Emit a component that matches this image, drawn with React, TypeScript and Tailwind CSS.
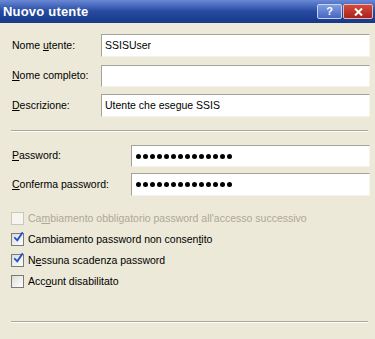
import React from 'react';

const font = { fontFamily: '"Liberation Sans", Arial, sans-serif' };

const Field: React.FC<{ value?: string; password?: boolean; className?: string }> = ({ value = '', password, className = '' }) => (
  <div
    className={`flex items-center bg-white border-t border-l border-[#a5a397] border-b border-r border-b-[#f4f3ee] border-r-[#f4f3ee] px-[3px] text-[10.5px] text-black ${className}`}
  >
    {password ? (
      <span className="flex gap-[2px] pl-[1px]">
        {Array.from({ length: 14 }).map((_, i) => (
          <span key={i} className="w-[5px] h-[5px] rounded-full bg-black" />
        ))}
      </span>
    ) : (
      value
    )}
  </div>
);

const Check: React.FC<{ checked?: boolean; disabled?: boolean; children: React.ReactNode }> = ({ checked, disabled, children }) => (
  <div className="flex items-center h-[21px]">
    <div
      className={`w-[13px] h-[13px] border flex items-center justify-center ${
        disabled ? 'border-[#cac8bb] bg-[#f6f5f0]' : 'border-[#7a7a7a] bg-gradient-to-br from-[#dcdcd6] to-white'
      }`}
    >
      {checked && (
        <svg width="11" height="13" viewBox="0 0 11 13" className="-mt-[4px] ml-[2px]">
          <path d="M1 7 L4 10 L10 1" stroke="#1f4fd1" strokeWidth="2.2" fill="none" strokeLinecap="square" />
        </svg>
      )}
    </div>
    <span className={`ml-[4px] text-[10.5px] ${disabled ? 'text-[#aca899]' : 'text-black'}`}>{children}</span>
  </div>
);

const Separator: React.FC = () => (
  <div className="mx-[11px] w-[357px] border-t border-[#aca899] border-b border-b-white" />
);

export default function App() {
  return (
    <div className="w-[375px] h-[339px] bg-[#ece9d8] overflow-hidden" style={font}>
      {/* title bar */}
      <div className="h-[23px] flex items-center justify-between bg-gradient-to-b from-[#6a88d6] via-[#264aa2] to-[#183887] pl-[3px] pr-[2px]">
        <span className="text-white font-bold text-[13px] tracking-[0.2px]">Nuovo utente</span>
        <div className="flex gap-[1px] items-center">
          <div className="w-[25px] h-[15px] rounded-[2px] border border-[#c8d4f0] bg-gradient-to-b from-[#7f9de3] to-[#4866bf] flex items-center justify-center text-white font-bold text-[11px] leading-none">
            ?
          </div>
          <div className="w-[30px] h-[15px] rounded-[2px] border border-[#e8b8b0] bg-gradient-to-b from-[#d5493a] to-[#a9231b] flex items-center justify-center">
            <svg width="9" height="8" viewBox="0 0 9 8">
              <path d="M1 0.5 L8 7.5 M8 0.5 L1 7.5" stroke="white" strokeWidth="2" />
            </svg>
          </div>
        </div>
      </div>

      {/* user fields */}
      <div className="flex flex-col gap-[8px] pt-[11px] pl-[12px] pr-[5px]">
        <div className="flex items-center h-[23px]">
          <span className="w-[89px] text-[10.5px] text-black">Nome <u>u</u>tente:</span>
          <Field value="SSISUser" className="flex-1 h-[23px]" />
        </div>
        <div className="flex items-center h-[22px]">
          <span className="w-[89px] text-[10.5px] text-black"><u>N</u>ome completo:</span>
          <Field className="flex-1 h-[22px]" />
        </div>
        <div className="flex items-center h-[23px] -mt-[1px]">
          <span className="w-[89px] text-[10.5px] text-black"><u>D</u>escrizione:</span>
          <Field value="Utente che esegue SSIS" className="flex-1 h-[23px]" />
        </div>
      </div>

      <div className="mt-[13px]">
        <Separator />
      </div>

      {/* password fields */}
      <div className="flex flex-col gap-[6px] pt-[13px] pl-[12px] pr-[5px]">
        <div className="flex items-center h-[22px]">
          <span className="w-[119px] text-[10.5px] text-black"><u>P</u>assword:</span>
          <Field password className="flex-1 h-[22px]" />
        </div>
        <div className="flex items-center h-[23px]">
          <span className="w-[119px] text-[10.5px] text-black"><u>C</u>onferma password:</span>
          <Field password className="flex-1 h-[23px]" />
        </div>
      </div>

      {/* options */}
      <div className="flex flex-col pt-[12px] pl-[11px]">
        <Check disabled>Ca<u>m</u>biamento obbligatorio password all'accesso successivo</Check>
        <Check checked>Cambiamento password non consen<u>t</u>ito</Check>
        <Check checked>N<u>e</u>ssuna scadenza password</Check>
        <Check>Acc<u>o</u>unt disabilitato</Check>
      </div>

      <div className="mt-[29px]">
        <Separator />
      </div>
    </div>
  );
}
